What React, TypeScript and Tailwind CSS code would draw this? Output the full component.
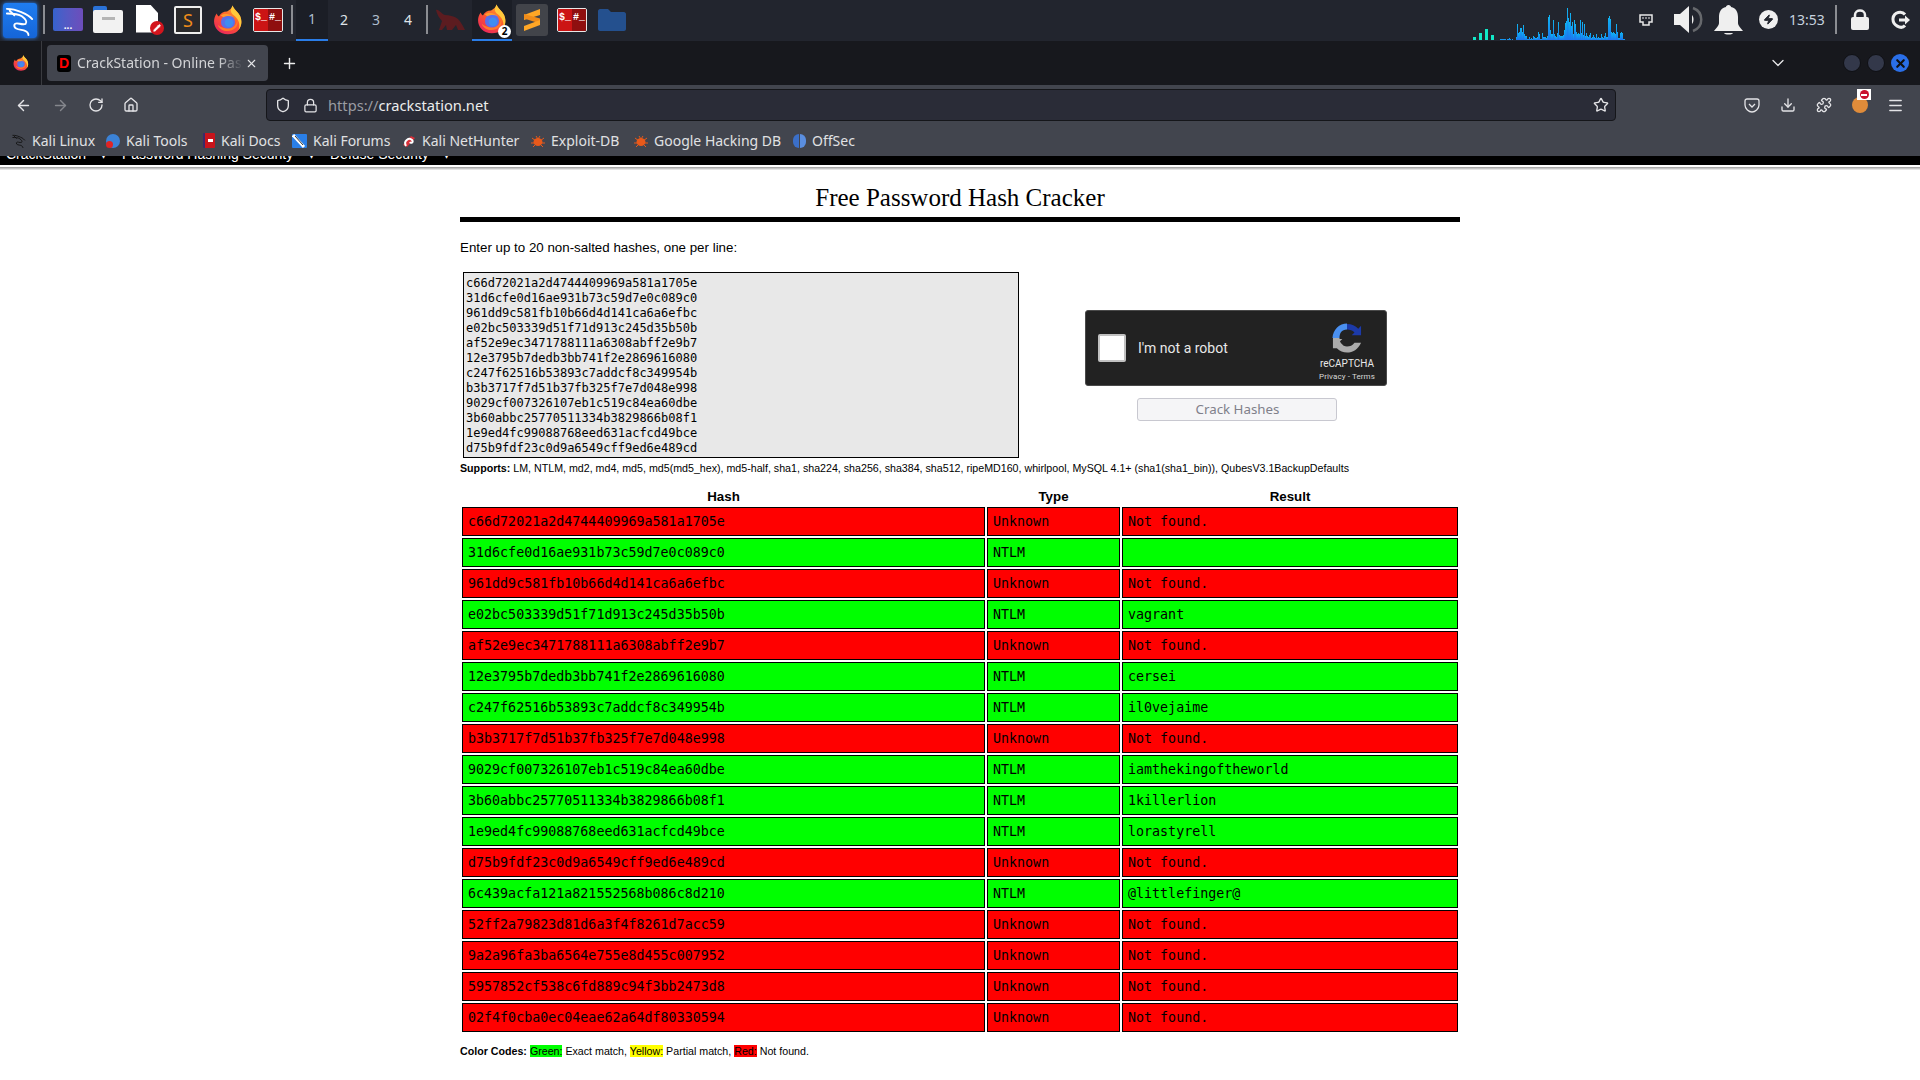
import React from "react";
import { ArrowLeft, ArrowRight, RotateCw, Home, Shield, Lock, Star, Download, Puzzle, Menu, X, Plus, ChevronDown, Zap, Pencil } from "lucide-react";

const NF = "Not found.";
const rows: [string, string, string][] = [
  ["c66d72021a2d4744409969a581a1705e", "Unknown", NF],
  ["31d6cfe0d16ae931b73c59d7e0c089c0", "NTLM", ""],
  ["961dd9c581fb10b66d4d141ca6a6efbc", "Unknown", NF],
  ["e02bc503339d51f71d913c245d35b50b", "NTLM", "vagrant"],
  ["af52e9ec3471788111a6308abff2e9b7", "Unknown", NF],
  ["12e3795b7dedb3bb741f2e2869616080", "NTLM", "cersei"],
  ["c247f62516b53893c7addcf8c349954b", "NTLM", "il0vejaime"],
  ["b3b3717f7d51b37fb325f7e7d048e998", "Unknown", NF],
  ["9029cf007326107eb1c519c84ea60dbe", "NTLM", "iamthekingoftheworld"],
  ["3b60abbc25770511334b3829866b08f1", "NTLM", "1killerlion"],
  ["1e9ed4fc99088768eed631acfcd49bce", "NTLM", "lorastyrell"],
  ["d75b9fdf23c0d9a6549cff9ed6e489cd", "Unknown", NF],
  ["6c439acfa121a821552568b086c8d210", "NTLM", "@littlefinger@"],
  ["52ff2a79823d81d6a3f4f8261d7acc59", "Unknown", NF],
  ["9a2a96fa3ba6564e755e8d455c007952", "Unknown", NF],
  ["5957852cf538c6fd889c94f3bb2473d8", "Unknown", NF],
  ["02f4f0cba0ec04eae62a64df80330594", "Unknown", NF],
];

const inputHashes = rows.slice(0, 12).map((r) => r[0]).join("\n");

const netBars = [1,1,1,1,1,1,0,1,1,2,1,0,1,0,0,0,3,16,7,8,12,12,8,15,6,4,4,1,1,3,1,2,1,4,3,2,2,3,8,6,1,1,7,3,3,3,2,4,23,25,10,6,6,20,6,4,3,7,18,5,4,4,4,5,10,17,19,32,22,18,27,14,18,6,20,16,8,6,7,6,20,7,18,5,16,4,7,4,3,5,7,2,3,5,3,2,6,2,3,2,2,6,3,2,4,7,3,3,22,24,21,8,7,8,7,6,16,8,2,2,7,8,7,1,1];
const upBars = [3, 0, 7, 0, 11, 0, 5];

function Firefox({ size = 30 }: { size?: number }) {
  return (
    <svg width={size} height={size} viewBox="0 0 32 32">
      <defs>
        <linearGradient id="ffb" x1="0.8" y1="0" x2="0.2" y2="1">
          <stop offset="0" stopColor="#ffb52e" />
          <stop offset="0.45" stopColor="#ff5a2c" />
          <stop offset="1" stopColor="#e8255e" />
        </linearGradient>
      </defs>
      <path d="M21 0.5C22 5 27 7 29 12C31 17 31 23 26 28C22 32 10 33 5 27C0 22 0 14 4 9C4.500 11 5.500 12 6.500 12C8 9 11 7 15 7C18 5 20 4 21 0.500Z" fill="url(#ffb)" />
      <path d="M21 0.5C22 5 27 7 29 12C31 17 31 22 27 27C30 20 27 14 21 10C18 7 19 4 21 0.500Z" fill="#ffc93c" />
      <circle cx="16" cy="18" r="7.500" fill="#5b6fe8" />
      <circle cx="17" cy="19" r="4.500" fill="#3f8df0" />
      <path d="M8 11C12 8 18 9 22 13C18 11 14 12 11 13Z" fill="#ff9a2e" />
      <path d="M5 21C7 27 14 29 20 27C25 25 27 21 26 16C25 22 20 26 14 25C10 24 7 23 5 21Z" fill="#ff7a2a" />
    </svg>
  );
}

function KaliDragon({ color = "white", size = 28 }: { color?: string; size?: number }) {
  return (
    <svg width={size} height={size} viewBox="0 0 32 32" fill="none" stroke={color} strokeWidth="2" strokeLinecap="round" strokeLinejoin="round">
      <path d="M2 3C8 3 12 4 16 6C21 8 25 9 29 14" />
      <path d="M2 8C7 8 14 8 18 11C22 14 24 17 22 19C18 21 11 16 10 20C9 25 16 25 20 26C23 27 25 29 25 31" />
      <path d="M5 5L10 10" />
    </svg>
  );
}

function Terminal() {
  return (
    <div className="w-[30px] h-[24px] flex border border-[#e8e8e8] rounded-[2px] overflow-hidden font-['Liberation_Mono',monospace] font-bold text-[10px] leading-[18px] text-white">
      <div className="w-1/2 bg-[#cc1414] pl-[1px]">$_</div>
      <div className="w-1/2 bg-[#8f0f0f] pl-[1px]">#_</div>
    </div>
  );
}

function SublimeMark() {
  return (
    <svg width="20" height="24" viewBox="0 0 20 24">
      <path d="M18 1L2 7V12L18 7Z" fill="#ffa726" />
      <path d="M2 10.500L18 15.500V10.500L2 6Z" fill="#f08c1a" />
      <path d="M18 12L2 18V23L18 17Z" fill="#ffa726" />
    </svg>
  );
}

function Sep({ className = "" }: { className?: string }) {
  return <div className={"w-[2px] h-[29px] bg-[#8b8d92] shrink-0 " + className} />;
}

function Favicon({ kind }: { kind: string }) {
  if (kind === "kali") return <KaliDragon color="#111" size={14} />;
  if (kind === "tools")
    return (
      <div className="relative w-[14px] h-[14px] rounded-full bg-[#3b82d6]">
        <div className="absolute left-0 bottom-0 w-[7px] h-[7px] rounded-full bg-[#e02424]" />
      </div>
    );
  if (kind === "docs")
    return (
      <div className="w-[12px] h-[15px] bg-[#c8141c] border-l-2 border-[#3a2a6a] rounded-[1px] flex items-center justify-center">
        <div className="w-[5px] h-[3px] bg-white" />
      </div>
    );
  if (kind === "forums")
    return (
      <svg width="15" height="14" viewBox="0 0 15 14">
        <rect width="15" height="14" rx="1" fill="#2a7fe8" />
        <path d="M1 1L12 13" stroke="white" strokeWidth="3" />
        <path d="M3 2L11 11" stroke="#333" strokeWidth="1" />
      </svg>
    );
  if (kind === "net")
    return (
      <svg width="14" height="14" viewBox="0 0 14 14" fill="none">
        <path d="M1 11L9 2L13 4L5 13Z" fill="#d8303a" />
        <path d="M4 12C1 7 7 3 10 6C12 8 9 10 8 8" stroke="white" strokeWidth="2" />
      </svg>
    );
  if (kind === "exploit")
    return (
      <svg width="14" height="14" viewBox="0 0 14 14">
        <ellipse cx="7" cy="8" rx="4.500" ry="4" fill="#e8591a" />
        <path d="M1 4L5 7M13 4L9 7M0 9H3M14 9H11M2 13L5 10M12 13L9 10M5 2L7 5M9 2L7 5" stroke="#e8591a" strokeWidth="1" />
      </svg>
    );
  return (
    <div className="flex gap-[1px]">
      <div className="w-[6px] h-[14px] rounded-l-full bg-[#3b6fc8]" />
      <div className="w-[6px] h-[14px] rounded-r-full bg-[#5a8ee0]" />
    </div>
  );
}

const bookmarks: [string, string, string][] = [
  ["kali", "Kali Linux", "w-[94px]"],
  ["tools", "Kali Tools", "w-[97px]"],
  ["docs", "Kali Docs", "w-[89px]"],
  ["forums", "Kali Forums", "w-[110px]"],
  ["net", "Kali NetHunter", "w-[129px]"],
  ["exploit", "Exploit-DB", "w-[103px]"],
  ["exploit", "Google Hacking DB", "w-[159px]"],
  ["off", "OffSec", "w-[70px]"],
];

function TopPanel() {
  return (
    <div className="h-[41px] pb-[2px] bg-[#22252e] flex items-center text-[#dfe3e8] font-['Noto_Sans',sans-serif] shrink-0">
      <div className="ml-[3px] mt-[2px] w-[34px] h-[35px] rounded-[3px] bg-gradient-to-b from-[#1f7df0] to-[#1565d8] shadow-[0_0_4px_#2a86ff] flex items-center justify-center shrink-0">
        <KaliDragon size={30} />
      </div>
      <Sep className="ml-[6px]" />
      <div className="ml-[8px] w-[30px] h-[23px] rounded-[2px] bg-gradient-to-r from-[#3563cc] to-[#6d4dbb] flex items-end justify-center text-white text-[10px] leading-[12px] font-bold shrink-0">...</div>
      <div className="ml-[10px] w-[30px] h-[27px] relative shrink-0">
        <div className="absolute left-0 top-0 w-[14px] h-[10px] bg-[#2a72d8] rounded-t-[2px]" />
        <div className="absolute left-0 top-[4px] w-[30px] h-[23px] bg-[#f2f2f2] rounded-[2px] flex justify-center pt-[7px]">
          <div className="w-[13px] h-[3px] bg-[#b5b5b5]" />
        </div>
      </div>
      <div className="ml-[13px] w-[28px] h-[30px] relative shrink-0">
        <div className="absolute left-0 top-0 w-[22px] h-[28px] bg-white [clip-path:polygon(0_0,65%_0,100%_30%,100%_100%,0_100%)]" />
        <div className="absolute right-0 bottom-0 w-[14px] h-[14px] rounded-full bg-[#d3151d] flex items-center justify-center">
          <Pencil size={8} color="white" fill="white" />
        </div>
      </div>
      <div className="ml-[10px] w-[28px] h-[28px] bg-[#2a2a2c] border-2 border-[#eeeeee] rounded-[2px] flex items-center justify-center text-[#f08c1a] text-[18px] leading-none shrink-0">S</div>
      <div className="ml-[11px] shrink-0"><Firefox /></div>
      <div className="ml-[10px] shrink-0"><Terminal /></div>
      <Sep className="ml-[8px]" />
      <div className="self-start ml-[3px] w-[32px] h-[41px] pb-[2px] bg-[#1b1e26] border-b-2 border-[#2a7de8] flex items-center justify-center text-[14px] text-[#aebdcc] shrink-0">1</div>
      <div className="w-[32px] text-center text-[14px] shrink-0">2</div>
      <div className="w-[32px] text-center text-[14px] text-[#aebdcc] shrink-0">3</div>
      <div className="w-[32px] text-center text-[14px] shrink-0">4</div>
      <Sep className="ml-[2px]" />
      <div className="ml-[7px] w-[30px] h-[24px] shrink-0">
        <svg width="30" height="24" viewBox="0 0 30 24" className="blur-[0.6px]">
          <path d="M1 2C4 1 6 6 10 7C14 7 19 8 23 11C26 14 28 18 30 22H23L21 17L17 22H12L11 17L7 22H4L7 13C4 10 2 6 1 2Z" fill="#5c1c20" />
        </svg>
      </div>
      <div className="self-start ml-[7px] w-[40px] h-[41px] pb-[2px] bg-[#1b1e26] border-b-2 border-[#2a7de8] relative flex items-center justify-center shrink-0">
        <Firefox />
        <div className="absolute right-[1px] bottom-[1px] w-[13px] h-[13px] rounded-full bg-white text-black text-[10px] leading-[13px] text-center font-bold">2</div>
      </div>
      <div className="ml-[4px] w-[32px] h-[32px] bg-[#42444a] rounded-[3px] flex items-center justify-center shrink-0"><SublimeMark /></div>
      <div className="ml-[9px] shrink-0"><Terminal /></div>
      <div className="ml-[11px] shrink-0">
        <svg width="28" height="22" viewBox="0 0 28 22"><path d="M0 2C0 1 1 0 2 0H10L13 3H26C27 3 28 4 28 5V20C28 21 27 22 26 22H2C1 22 0 21 0 20Z" fill="#24508e" /></svg>
      </div>
      <div className="self-start ml-[847px] w-[22px] h-[40px] flex items-end shrink-0">
        {upBars.map((h, i) => (
          <div key={i} className="w-[3px] bg-[#12e8c8]" style={{ height: h }} />
        ))}
      </div>
      <div className="self-start ml-[5px] w-[125px] h-[40px] flex items-end shrink-0">
        {netBars.map((h, i) => (
          <div key={i} className="w-[1px] bg-gradient-to-b from-[#12b4f0] to-[#1e74ee]" style={{ height: h }} />
        ))}
      </div>
      <div className="ml-[14px] shrink-0">
        <svg width="14" height="12" viewBox="0 0 14 12"><path d="M1 1H13V8H10V11H4V8H1Z" fill="none" stroke="#e8e8e8" strokeWidth="1.500" /><path d="M4 3V5M7 3V5M10 3V5" stroke="#e8e8e8" /></svg>
      </div>
      <div className="ml-[21px] shrink-0">
        <svg width="29" height="29" viewBox="0 0 29 29">
          <path d="M0 9H6L15 1V28L6 20H0Z" fill="#efefef" />
          <path d="M18 10C20 12 20 17 18 19Z" fill="#efefef" />
          <path d="M19 3C30 7 30 22 19 26" fill="none" stroke="#66686c" strokeWidth="2.500" />
        </svg>
      </div>
      <div className="ml-[11px] shrink-0">
        <svg width="29" height="30" viewBox="0 0 29 30">
          <path d="M14.500 0C16 0 17 1 17 2C22 3 24 7 24 12V18C24 21 27 23 29 26H0C2 23 5 21 5 18V12C5 7 7 3 12 2C12 1 13 0 14.500 0Z" fill="#efefef" />
          <path d="M10 28H19C18 30 11 30 10 28Z" fill="#efefef" />
        </svg>
      </div>
      <div className="ml-[16px] w-[19px] h-[19px] rounded-full bg-[#efefef] flex items-center justify-center shrink-0">
        <Zap size={11} color="#22252e" fill="#22252e" />
      </div>
      <div className="ml-[11px] w-[36px] text-[14px] leading-none text-[#c6d2de] shrink-0">13:53</div>
      <Sep className="ml-[10px]" />
      <div className="ml-[14px] shrink-0">
        <svg width="18" height="21" viewBox="0 0 18 21">
          <path d="M4 9V6C4 0 14 0 14 6V9" fill="none" stroke="#efefef" strokeWidth="2.500" />
          <rect y="8" width="18" height="13" rx="2" fill="#efefef" />
        </svg>
      </div>
      <div className="ml-[22px] shrink-0">
        <svg width="20" height="20" viewBox="0 0 20 20" fill="none" stroke="#efefef" strokeWidth="3">
          <path d="M14 4.500C11 1 3 1.500 2 8.500C1.500 15 10 20 14 15.500" />
          <path d="M8 10H15" />
          <path d="M14 5.500L19 10L14 14.500Z" fill="#efefef" strokeWidth="0" />
        </svg>
      </div>
    </div>
  );
}

function TabBar() {
  return (
    <div className="h-[44px] bg-[#17181d] flex items-center font-['Noto_Sans',sans-serif] shrink-0">
      <div className="w-[42px] h-full flex items-center justify-center border-r border-[#3a3b40] shrink-0">
        <Firefox size={16} />
      </div>
      <div className="ml-[5px] w-[221px] h-[36px] bg-[#42454e] rounded-[4px] flex items-center pl-[10px] shrink-0">
        <div className="w-[14px] h-[17px] bg-black rounded-[3px] text-[#ff0000] text-[14px] leading-[17px] font-bold text-center font-['Liberation_Sans',sans-serif] shrink-0">D</div>
        <div className="ml-[6px] w-[166px] text-[14px] leading-none text-[#d3d4d7] whitespace-nowrap overflow-hidden [mask-image:linear-gradient(to_right,black_85%,transparent)]">CrackStation - Online Password</div>
        <X size={13} color="#e6e6e8" className="ml-[2px] shrink-0" />
      </div>
      <Plus size={17} color="#ededee" className="ml-[13px]" />
      <ChevronDown size={20} color="#e8e8ea" className="ml-[1470px]" strokeWidth={1.500} />
      <div className="ml-[55px] w-[18px] h-[18px] rounded-full bg-[#33384a] border border-[#0f1014]" />
      <div className="ml-[6px] w-[18px] h-[18px] rounded-full bg-[#33384a] border border-[#0f1014]" />
      <div className="ml-[6px] w-[18px] h-[18px] rounded-full bg-[#2a6fe8] flex items-center justify-center">
        <X size={13} color="#111" strokeWidth={4} />
      </div>
    </div>
  );
}

function NavBar() {
  return (
    <div className="h-[40px] bg-[#42454e] flex items-center font-['Noto_Sans',sans-serif] shrink-0">
      <ArrowLeft size={17} color="#e4e4e7" className="ml-[15px]" />
      <ArrowRight size={17} color="#85878d" className="ml-[20px]" />
      <RotateCw size={16} color="#e4e4e7" className="ml-[19px]" />
      <Home size={16} color="#e4e4e7" className="ml-[19px]" />
      <div className="ml-[127px] w-[1350px] h-[32px] bg-[#2a2c37] border border-[#15161a] rounded-[4px] flex items-center shrink-0">
        <Shield size={16} color="#e4e4e7" className="ml-[8px]" />
        <Lock size={15} color="#e4e4e7" className="ml-[12px]" />
        <div className="ml-[10px] flex-1 text-[14.67px] leading-none text-[#9a9ca3]">https://<span className="text-[#eceded]">crackstation.net</span></div>
        <Star size={16} color="#e4e4e7" className="mr-[6px]" />
      </div>
      <svg width="16" height="15" viewBox="0 0 16 15" fill="none" stroke="#e4e4e7" strokeWidth="1.300" className="ml-[128px]">
        <path d="M1 3C1 1.500 2 1 3 1H13C14 1 15 1.500 15 3V7C15 11 11 14 8 14C5 14 1 11 1 7Z" />
        <path d="M5 6L8 9L11 6" />
      </svg>
      <Download size={16} color="#e4e4e7" className="ml-[20px]" />
      <Puzzle size={16} color="#e4e4e7" className="ml-[20px]" />
      <div className="ml-[20px] w-[16px] h-[16px] rounded-full bg-[#e08c3a] relative">
        <div className="absolute right-[-3px] top-[-8px] w-[14px] h-[11px] bg-white flex items-center justify-center">
          <div className="w-[9px] h-[9px] rounded-full bg-[#c8102e] flex items-center justify-center"><div className="w-[6px] h-[2px] bg-white" /></div>
        </div>
      </div>
      <Menu size={17} color="#e4e4e7" className="ml-[19px]" />
    </div>
  );
}

function Bookmarks() {
  return (
    <div className="h-[31px] bg-[#42454e] flex items-center pl-[12px] text-[14px] leading-none text-[#e0e1e3] font-['Noto_Sans',sans-serif] shrink-0">
      {bookmarks.map(([k, t, w]) => (
        <div key={t} className={"flex items-center gap-[6px] shrink-0 " + w}>
          <Favicon kind={k} />
          <span className="whitespace-nowrap">{t}</span>
        </div>
      ))}
    </div>
  );
}

function ClippedNav() {
  return (
    <div className="shrink-0">
      <div className="h-[8px] bg-black overflow-hidden text-white text-[14px] leading-[16px] font-['Liberation_Sans',sans-serif]">
        <div className="-mt-[10px] pl-[6px] flex whitespace-nowrap">
          <span className="w-[94px]">CrackStation</span>
          <span className="w-[22px]">▾</span>
          <span className="w-[186px]">Password Hashing Security</span>
          <span className="w-[22px]">▾</span>
          <span className="w-[113px]">Defuse Security</span>
          <span>▾</span>
        </div>
      </div>
      <div className="h-[1px] bg-black" />
      <div className="h-[2px] bg-white" />
      <div className="h-[3px] bg-gradient-to-b from-[#9a9a9a] to-[#f2f2f2]" />
    </div>
  );
}

function Recaptcha() {
  return (
    <div className="w-[302px] h-[76px] bg-[#222222] border border-[#4a4a4a] rounded-[3px] flex items-center font-['Roboto',sans-serif] shrink-0">
      <div className="ml-[12px] w-[28px] h-[28px] bg-white border-2 border-[#c1c1c1] rounded-[2px] shrink-0" />
      <div className="ml-[12px] text-[14px] text-[#e8e8e8] flex-1">I'm not a robot</div>
      <div className="w-[70px] mr-[4px] mt-[8px] flex flex-col items-center shrink-0">
        <svg width="30" height="30" viewBox="0 0 32 32" fill="none" className="mb-[5px]">
          <path d="M4 16H0.500C1 7 8 0.500 16 0.500V7C10 7 8 11 8 16Z" fill="#4a90f0" />
          <path d="M16 1C21 1 25 3 28 6L31 3V13H21L24 10C22 8 19 7 16 7Z" fill="#1c3aa9" />
          <path d="M1 16H8C8 21 11 25 16 25C19 25 22 24 24 21H31C28 28 22 31.500 16 31.500C8 31.500 1 25 1 16Z" fill="#ababab" />
          <path d="M1 27V17H11L8 20C10 22 12 24 12 24L5 27Z" fill="#ababab" />
        </svg>
        <div className="text-[10px] leading-[12px] text-[#e8e8e8]">reCAPTCHA</div>
        <div className="mt-[1px] text-[8px] leading-[11px] text-[#d8d8d8] tracking-[0.1px]">Privacy - Terms</div>
      </div>
    </div>
  );
}

function Cell({ children, className = "" }: { children?: React.ReactNode; className?: string }) {
  return <td className={"h-[29px] border border-black px-[5px] py-0 " + className}>{children}</td>;
}

export default function App() {
  return (
    <div className="w-[1920px] h-[1080px] overflow-hidden bg-white flex flex-col">
      <TopPanel />
      <TabBar />
      <NavBar />
      <Bookmarks />
      <ClippedNav />
      <main className="mx-auto w-[1000px] font-['Liberation_Sans',sans-serif] text-black">
        <h1 className="mt-[13px] text-center text-[25px] leading-[30px] font-['Liberation_Serif',serif]">Free Password Hash Cracker</h1>
        <div className="mt-[4px] h-[5px] bg-black" />
        <p className="mt-[18px] text-[13.33px] leading-[15px]">Enter up to 20 non-salted hashes, one per line:</p>
        <div className="mt-[17px] flex">
          <textarea
            readOnly
            defaultValue={inputHashes}
            className="ml-[3px] w-[556px] h-[186px] pt-[3px] px-[2px] pb-[1px] border border-black bg-[#e8e8e8] text-[12px] leading-[15px] font-['DejaVu_Sans_Mono',monospace] resize-none overflow-hidden outline-none"
          />
          <div className="w-[434px] pt-[38px] flex flex-col items-center">
            <Recaptcha />
            <button className="mt-[12px] ml-[1px] w-[200px] h-[23px] pt-[1px] pl-[2px] bg-[#f5f5f7] border border-[#c8c8d0] rounded-[3px] text-[13.33px] leading-none text-[#80808a] font-['Noto_Sans',sans-serif]">Crack Hashes</button>
          </div>
        </div>
        <p className="mt-[4px] text-[10.67px] leading-[13px] whitespace-nowrap"><b>Supports:</b> LM, NTLM, md2, md4, md5, md5(md5_hex), md5-half, sha1, sha224, sha256, sha384, sha512, ripeMD160, whirlpool, MySQL 4.1+ (sha1(sha1_bin)), QubesV3.1BackupDefaults</p>
        <table className="mt-[12px] w-[1000px] table-fixed border-separate border-spacing-[2px]">
          <colgroup>
            <col className="w-[523px]" />
            <col className="w-[133px]" />
            <col />
          </colgroup>
          <thead>
            <tr className="text-[13.33px] leading-[16px] font-bold">
              <th>Hash</th>
              <th>Type</th>
              <th>Result</th>
            </tr>
          </thead>
          <tbody className="text-[13.33px] leading-[16px] font-['DejaVu_Sans_Mono',monospace]">
            {rows.map((r) => (
              <tr key={r[0]} className={r[1] === "NTLM" ? "bg-[#00ff00]" : "bg-[#ff0000]"}>
                <Cell>{r[0]}</Cell>
                <Cell>{r[1]}</Cell>
                <Cell>{r[2]}</Cell>
              </tr>
            ))}
          </tbody>
        </table>
        <p className="mt-[11px] text-[10.67px] leading-[13px]">
          <b>Color Codes:</b> <span className="bg-[#00ff00]">Green:</span> Exact match, <span className="bg-[#ffff00]">Yellow:</span> Partial match, <span className="bg-[#ff0000]">Red:</span> Not found.
        </p>
      </main>
    </div>
  );
}
